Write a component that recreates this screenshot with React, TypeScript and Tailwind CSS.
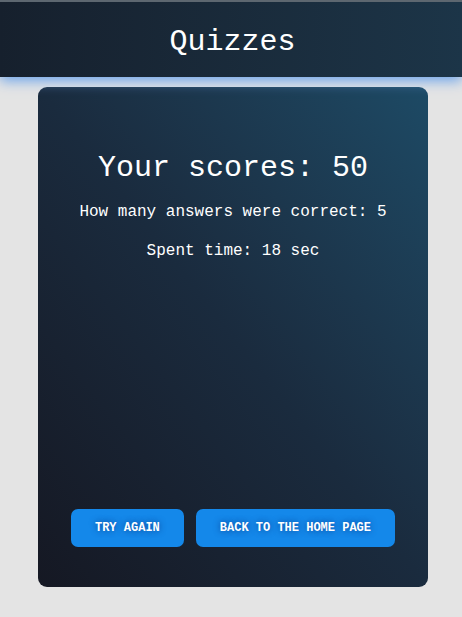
import React from "react";

export default function App() {
  const mono = { fontFamily: '"Liberation Mono", "Courier New", monospace' };
  return (
    <div className="min-h-[617px] bg-[#e4e4e4] flex flex-col" style={mono}>
      <header className="relative z-10 h-[77px] border-t-2 border-[#5d6770] bg-gradient-to-r from-[#16202d] to-[#1c3548] flex items-center justify-center pt-[4px] pl-[3px] shadow-[0_4px_12px_rgba(110,165,235,1)]">
        <h1 className="text-[30px] leading-none text-white font-normal">Quizzes</h1>
      </header>
      <main className="flex justify-center pt-[10px] pl-[4px]">
        <div className="w-[390px] h-[500px] rounded-[9px] bg-gradient-to-tr from-[#151823] via-[#1a2b3e] to-[#1d4a65] flex flex-col items-center text-white pt-[62px] pb-[40px]">
          <h2 className="text-[30px] leading-[38px] font-normal">Your scores: 50</h2>
          <p className="mt-[13px] text-[16px] leading-[24px]">How many answers were correct: 5</p>
          <p className="mt-[15px] text-[16px] leading-[24px]">Spent time: 18 sec</p>
          <div className="mt-auto flex gap-[12px]">
            <button className="h-[38px] px-[24px] rounded-[7px] bg-[#1488ea] text-white text-[12px] font-bold [text-shadow:0_0_6px_rgba(10,60,140,0.9)]">TRY AGAIN</button>
            <button className="h-[38px] px-[24px] rounded-[7px] bg-[#1488ea] text-white text-[12px] font-bold [text-shadow:0_0_6px_rgba(10,60,140,0.9)]">BACK TO THE HOME PAGE</button>
          </div>
        </div>
      </main>
    </div>
  );
}
